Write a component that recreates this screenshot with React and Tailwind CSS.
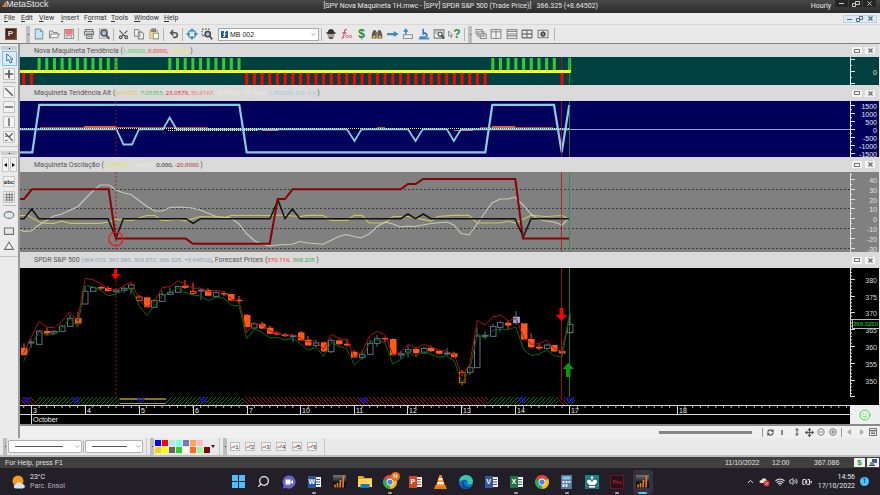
import React from "react";
import {
  Search, Scissors, Undo2, Wifi, Volume2, ChevronUp, ChevronDown, RefreshCw, Move, MoveVertical, Smile,
  BatteryCharging,
} from "lucide-react";

const UI = "font-['Open_Sans','Noto_Sans',sans-serif]";
const ROBOTO = "font-['Roboto','Noto_Sans',sans-serif]";
const ARIAL = "font-['Liberation_Sans',Arial,sans-serif]";

/* ---------- chart data ---------- */

const STEP = 7.69;
const barX = (i) => 23.7 + STEP * i;
const level = (v) => 255 + v / 3;

const range = (a, b) => Array.from({ length: b - a + 1 }, (_, k) => a + k);
const UP_BARS = [...range(2, 12), ...range(19, 28), ...range(61, 69), 71];
const DOWN_BARS = [0, 1, ...range(29, 60), 70];

/* [type, body top, body bottom, wick top, wick bottom]; h hollow, o orange, q hollow orange, b blue */
const CANDLES = [
  ["o", 278, 299, 265, 300], ["h", 261, 263, 252, 278], ["h", 228, 268, 225, 268], ["o", 228, 234, 218, 240],
  ["h", 229, 234, 225, 238], ["h", 213, 229, 210, 229], ["h", 190, 214, 178, 214], ["o", 189, 204, 170, 210],
  ["h", 109, 147, 95, 147], ["h", 98, 109, 96, 109], ["o", 96, 99, 92, 106], ["o", 99, 107, 93, 110],
  ["h", 105, 110, 100, 115], ["h", 100, 106, 95, 113], ["h", 90, 101, 86, 118], ["q", 126, 136, 120, 140],
  ["o", 127, 155, 127, 158], ["h", 137, 157, 132, 157], ["h", 118, 139, 108, 139], ["h", 112, 118, 98, 120],
  ["h", 94, 112, 92, 112], ["o", 92, 97, 75, 102], ["q", 109, 115, 83, 120], ["h", 105, 108, 100, 135],
  ["o", 105, 121, 100, 121], ["h", 113, 124, 107, 126], ["o", 114, 117, 108, 124], ["o", 117, 135, 117, 138],
  ["o", 134, 137, 123, 145], ["o", 180, 215, 177, 217], ["h", 206, 219, 202, 222], ["o", 206, 219, 200, 222],
  ["o", 218, 235, 212, 235], ["o", 233, 237, 228, 241], ["o", 238, 242, 234, 246], ["h", 242, 244, 238, 262],
  ["o", 232, 255, 228, 255], ["o", 254, 270, 243, 272], ["h", 264, 271, 257, 276], ["o", 262, 288, 260, 290],
  ["h", 257, 290, 250, 294], ["o", 256, 266, 253, 271], ["o", 266, 270, 252, 274], ["o", 290, 306, 285, 309],
  ["h", 299, 307, 290, 314], ["h", 265, 298, 255, 298], ["h", 251, 265, 240, 276], ["o", 249, 252, 245, 262],
  ["o", 252, 299, 250, 302], ["h", 296, 300, 287, 312], ["h", 284, 291, 271, 308], ["o", 282, 293, 276, 302],
  ["h", 280, 294, 276, 296], ["o", 279, 287, 272, 292], ["o", 287, 295, 284, 298], ["h", 294, 296, 278, 302],
  ["o", 295, 305, 290, 308], ["q", 352, 383, 345, 392], ["h", 338, 352, 330, 360], ["h", 243, 338, 218, 338],
  ["h", 241, 243, 230, 250], ["h", 215, 244, 207, 244], ["h", 203, 217, 198, 230], ["o", 203, 210, 198, 222],
  ["b", 185, 204, 168, 210], ["o", 205, 252, 205, 254], ["o", 252, 275, 235, 279], ["o", 275, 279, 265, 285],
  ["h", 270, 280, 265, 284], ["o", 270, 288, 270, 290], ["o", 288, 294, 285, 298], ["h", 208, 233, 176, 236],
];
const FORECAST_HIGH = [
  295, 245, 199, 217, 218, 198, 172, 198, 70, 74, 86, 103, 106, 92, 80, 134, 157, 140, 98, 95, 78, 86, 100, 99, 110,
  106, 110, 132, 140, 232, 206, 210, 228, 235, 240, 239, 250, 262, 256, 284, 238, 250, 255, 308, 290, 242, 229, 240,
  300, 292, 268, 280, 268, 276, 286, 288, 300, 364, 328, 196, 211, 186, 181, 198, 190, 247, 268, 266, 255, 282, 289, 176,
];
const FORECAST_LOW = [
  318, 270, 230, 241, 238, 220, 190, 215, 92, 95, 106, 122, 118, 105, 98, 152, 181, 152, 122, 114, 98, 112, 120, 123,
  137, 127, 129, 151, 152, 250, 222, 232, 248, 248, 254, 250, 266, 286, 277, 304, 262, 274, 280, 330, 308, 262, 254, 264,
  327, 314, 292, 305, 289, 298, 307, 303, 318, 383, 345, 235, 252, 226, 222, 224, 216, 284, 302, 298, 285, 301, 307, 180,
];
const linePts = (a) => a.map((v, i) => `${barX(i)},${level(v)}`).join(" ");

const DAYS = [
  [31.5, "3"], [85.5, "4"], [139.5, "5"], [193.5, "6"], [247.5, "7"], [300.5, "10"], [354.5, "11"], [407.5, "12"],
  [461.5, "13"], [515.5, "14"], [569.5, "17"], [677.5, "18"],
];

/* ---------- panels ---------- */

function PanelHeader({ height, children }) {
  return (
    <div className={`flex items-center bg-[#dadada] pl-[14px] pr-1 text-[7px] leading-[10px] text-[#555] ${ROBOTO} ${height}`}>
      <p className="flex-1 whitespace-pre">{children}</p>
      <div className="flex gap-[3px]">
        <button aria-label="Maximize panel" className="flex h-[7px] w-[10px] items-center justify-center bg-[#f4f4f4]">
          <span className="h-[4px] w-[6px] border border-[#777]" />
        </button>
        <button aria-label="Close panel" className="flex h-[7px] w-[10px] items-center justify-center bg-[#f4f4f4]">
          <svg width="5" height="5" viewBox="0 0 5 5" stroke="#666" strokeWidth="1.2"><path d="M.5.5l4 4M4.5.5l-4 4" /></svg>
        </button>
      </div>
    </div>
  );
}

const Val = ({ color, children }) => (
  <span className={`text-[6px] font-['Open_Sans','Noto_Sans',sans-serif] ${color}`}>{children}</span>
);

function Plot({ top, bg, height, children }) {
  return (
    <svg className={`block min-w-0 flex-1 ${height} ${bg}`}>
      <g transform={`translate(-20 ${-top})`}>{children}</g>
    </svg>
  );
}

function Scale({ top, bg, height, y1, y2, major, minor = [], color = "#e8e8e8", children }) {
  return (
    <svg className={`block w-[29px] shrink-0 ${height} ${bg} ${ARIAL}`}>
      <g transform={`translate(-850 ${-top})`}>
        <path d={`M850.5 ${y1}V${y2}`} stroke={color} />
        {minor.map((y) => <path key={y} d={`M850 ${y}h2`} stroke={color} />)}
        {major.map(([y, label]) => (
          <g key={y}>
            <path d={`M850 ${y}h5`} stroke={color} />
            {label && <text x="877" y={y + 3} textAnchor="end" fontSize="7" fill={color}>{label}</text>}
          </g>
        ))}
        {children}
      </g>
    </svg>
  );
}

const Cursors = ({ y1, y2 }) => (
  <>
    <path d={`M115.900 ${y1}V${y2}`} stroke="#c01020" strokeDasharray="2 2" strokeOpacity=".85" />
    <path d={`M561.500 ${y1}V${y2}`} stroke="#c01010" strokeOpacity=".8" />
    <path d={`M569.500 ${y1}V${y2}`} stroke="#1f9a30" strokeOpacity=".8" />
  </>
);

function TrendPanel() {
  return (
    <section>
      <PanelHeader height="h-[13px]">
        Nova Maquineta Tendência (<Val color="text-[#32cd32]">1.00000, </Val>
        <Val color="text-[#ff1010]">0.0000, </Val><Val color="text-[#f4ee3c]">0.0000 </Val>)
      </PanelHeader>
      <div className="flex">
        <Plot top={57} bg="bg-[#004040]" height="h-[28px]">
          {UP_BARS.map((i) => <rect key={i} x={barX(i) - 1.5} y="58" width="3" height="13" fill="#32cd32" />)}
          {DOWN_BARS.map((i) => <rect key={i} x={barX(i) - 1.5} y="72" width="3" height="13" fill="#ff0000" />)}
          <Cursors y1={57} y2={86} />
          <rect x="20" y="70" width="551" height="3" fill="#ffff00" />
        </Plot>
        <Scale top={57} bg="bg-[#004040]" height="h-[28px]" y1={57} y2={85} minor={[65.5, 77.5]}
          major={[[59.5, ""], [71.5, "0"], [83.5, ""]]} />
      </div>
    </section>
  );
}

function TrendAltPanel() {
  return (
    <section>
      <PanelHeader height="h-[16px]">
        Maquineta Tendência Alt (<Val color="text-[#f0c81e]">20.5052, </Val>
        <Val color="text-[#32cd32]">7.05355, </Val><Val color="text-[#ff1010]">23.0579, </Val>
        <Val color="text-[#ff6a2a]">50.6167, </Val><Val color="text-[#f1edd2]">53.7692, -53.7692, </Val>
        <Val color="text-[#8fcbdc]">1,500.00, 0.0, 0.0 </Val>)
      </PanelHeader>
      <div className="flex">
        <Plot top={101} bg="bg-[#00005c]" height="h-[56px]">
          <path d="M569 129.5H3000" stroke="#9c9cd8" />
          <path d="M40 127.5H84M139 127.5H208M480 127.5H553" stroke="#c0392b" fill="none" />
          <path d="M84 127H116M492 127H515" stroke="#ff5a1a" strokeWidth="2" />
          <path d="M116 127.5H139M377 127.5H385" stroke="#d35020" />
          <path d="M262 130.5H278M454 130.5H473" stroke="#e07040" />
          <path d="M20 129.3H116.5L123.5 144.5H132L139 129.3H163L169.7 117.5L176.5 129.3H347L354.5 141L361.5 129.3H408L415.5 141L422.7 129.3H447L453.8 141L461 129.3H569" stroke="#87cede" strokeWidth="1.8" fill="none" />
          <path d="M20 128.500H569" stroke="#f3efd8" strokeDasharray="1 1" />
          <path d="M168 130.5H258" stroke="#f3efd8" strokeDasharray="1 1" />
          <path d="M20 152.3H32.3L39.3 104.8H239.3L246.7 152.3H485.3L492.3 104.8H554L561.7 152.3L569.3 104.8" stroke="#87cede" strokeWidth="2.2" fill="none" />
          <Cursors y1={101} y2={157} />
        </Plot>
        <Scale top={101} bg="bg-[#00005c]" height="h-[56px]" y1={101} y2={157}
          minor={[109.5, 117.5, 125.5, 133.5, 141.5, 149.5]}
          major={[[105.5, "1500"], [113.5, "1000"], [121.5, "500"], [129.5, "0"], [137.5, "-500"], [145.5, "-1000"], [153.5, "-1500"]]} />
      </div>
    </section>
  );
}

function OscillationPanel() {
  return (
    <section>
      <PanelHeader height="h-[15px]">
        Maquineta Oscilação (<Val color="text-[#e8e620]">-2.00000, </Val>
        <Val color="text-[#f1edd2]">1.86514, </Val><Val color="text-black">0.000, </Val>
        <Val color="text-[#a01010]">-20.0000 </Val>)
      </PanelHeader>
      <div className="flex">
        <Plot top={172} bg="bg-[#808080]" height="h-[80px]">
          {[189.5, 208.5, 228.5, 248.5].map((y) => <path key={y} d={`M20 ${y}H3000`} stroke="#3a3a3a" strokeDasharray="2 2" />)}
          <polyline fill="none" stroke="#c8c850" strokeWidth="1.2" points="20,215.5 28,215.5 39,222 46,223.3 54,223.3 62,221 70,223.3 100,223.3 108,222 116,219.5 124,220 132,220.5 140,217.5 147,215.5 155,215.5 162,220.5 168,220.5 176,219 185,221 193,218.7 200,216.5 225,217.5 231,215.5 270,215.5 278,215 300,216.5 307,215.3 323,215.3 331,220.5 347,220.5 354,215.3 362,215.3 369,223 385,223 393,216.5 408,216.5 431,221 438,216.5 453,215.3 469,215.3 477,223 500,223 508,221 515,223 531,215.3 546,216.5 562,215.5 569,219" />
          <polyline fill="none" stroke="#c9c9b6" strokeWidth="1.1" points="20,230 24,231.5 31,231 39,225 54,216 62,214 78,206.5 85,199 93,191 100,185 109,185 116,190 124,193 131,194.5 147,206.5 155,211 162,211 170,207.5 178,207 192,208 200,210 216,216.5 231,218 239,224 247,234 255,241 262,244 270,246 280,244.7 292,244.3 300,241.5 308,243 323,244.3 339,236.5 346,234.5 354,236.5 361,238 369,234 378,226 385,222 393,224 400,227 408,226 415,226.5 423,225 431,223.5 447,222 454,225 461,233.5 469,235 477,224 492,203 500,199 508,199 515,197 523,205 531,214 538,219 546,221 554,222 562,225 569,218" />
          <polyline fill="none" stroke="#111" strokeWidth="1.5" points="20,218.7 24,218.7 31.7,209 39,218.7 108,218.7 116,238 123.3,218.7 186,218.7 193,223.3 200.7,218.7 270,218.7 278,200 285,218.7 292.3,209 300,218.7 400.7,218.7 408,214 415.5,218.7 423.3,214 431,218.7 515,218.7 523.3,237 531,218.7 569.3,218.7" />
          <polyline fill="none" stroke="#8b0000" strokeWidth="2" points="20,199 24,199 32,189.3 108.7,189.3 115.9,238.6 185.7,238.6 193,243.7 269.7,243.7 277.7,199 285,199 292.5,189.3 400.7,189.3 408,184 415.7,184 423,179 515.3,179 523,238.6 569.3,238.6" />
          <circle cx="115.8" cy="238.8" r="7" fill="none" stroke="#e81c1c" strokeWidth="1.3" />
          <Cursors y1={172} y2={253} />
        </Plot>
        <Scale top={172} bg="bg-[#808080]" height="h-[80px]" y1={173} y2={252} color="#e0e0e0"
          minor={[174.5, 184.5, 194.5, 203.5, 213.5, 223.5, 233.5, 243.5]}
          major={[[179.5, "40"], [189.5, "30"], [199.5, "20"], [208.5, "10"], [218.5, "0"], [228.5, "-10"], [238.5, "-20"], [248.5, "-30"]]} />
      </div>
    </section>
  );
}

function Candle({ i, data }) {
  const [type, a, b, w1, w2] = data;
  const x = Math.round(barX(i)) - 3;
  const color = type === "o" || type === "q" ? "#ff5a14" : "#5f7390";
  const y = level(a);
  const h = Math.max(level(b) - y, 1);
  return (
    <g>
      <path d={`M${x + 3} ${level(w1)}V${y}M${x + 3} ${y + h}V${level(w2)}`} stroke={color} />
      {type === "o" && <rect x={x} y={y} width="6.5" height={h + 0.5} fill={color} />}
      {type === "b" && <rect x={x} y={y} width="7" height={h} fill="#8fa6cc" />}
      {(type === "h" || type === "q") && <rect x={x + 0.5} y={y} width="5.5" height={h} fill="none" stroke={color} />}
    </g>
  );
}

/* [x, width, rising] stretches of the ribbon under the price */
const RIBBON = [[20, 15, 0], [35, 85, 1], [166, 77, 1], [243, 245, 0], [488, 70, 1], [558, 10, 0], [568, 7, 1]];

function Hatch({ x, w, up }) {
  const lines = range(0, Math.floor(w / 4)).map((k) => {
    const s = x + k * 4;
    return up ? `M${s - 2} 405l8-8` : `M${s - 2} 397l8 8`;
  });
  return (
    <svg x={x} y="397" width={w} height="8" viewBox={`${x} 397 ${w} 8`}>
      <path d={lines.join("")} stroke={up ? "#087018" : "#a01018"} strokeWidth="1" />
    </svg>
  );
}

function PricePanel() {
  const ticks = range(0, 38).map((k) => 269.2 + k * 3.36).filter((y) => y < 396);
  return (
    <section>
      <PanelHeader height="h-[16px]">
        SPDR S&amp;P 500 <Val color="text-[#7c9bbb]">(364.010, 367.380, 363.970, 366.325, +8.64502)</Val>, Forecast Prices (
        <Val color="text-[#ff1010]">370.116, </Val><Val color="text-[#22a022]">368.205 </Val>)
      </PanelHeader>
      <div className="flex">
        <Plot top={268} bg="bg-black" height="h-[137px]">
          {RIBBON.map(([x, w, up]) => <Hatch key={x} x={x} w={w} up={up} />)}
          <path d="M120 399H166" stroke="#857a00" strokeWidth="2" />
          <path d="M120 403.5H166" stroke="#b0a400" />
          {[27, 76, 141, 203, 364, 522, 570].map((x) => (
            <path key={x} d={`M${x - 3} 397.5c0 6 6 6 6 0M${x - 3.5} 398.5l1.5-1M${x + 3.5} 398.5l-1.5-1M${x - 1.5} 399h3`} stroke="#1414d8" strokeWidth="1.3" fill="none" />
          ))}
          {CANDLES.map((c, i) => <Candle key={i} i={i} data={c} />)}
          <polyline points={linePts(FORECAST_HIGH)} fill="none" stroke="#b80c14" />
          <polyline points={linePts(FORECAST_LOW)} fill="none" stroke="#006e0c" />
          <Cursors y1={268} y2={397} />
          <path d="M114 269h3v5h3l-4.500 5.500l-4.500-5.500h3z" fill="#ff0000" />
          <path d="M559.500 308h4v7h3.500l-5.500 6l-5.500-6h3.500z" fill="#ff0000" />
          <path d="M566 377h4.500v-8h3.500l-5.700-6l-5.700 6h3.400z" fill="#0a960a" />
        </Plot>
        <Scale top={268} bg="bg-black" height="h-[137px]" y1={268} y2={396} minor={ticks} color="#d4d4d4"
          major={[[279.5, "380"], [296.5, "375"], [312.5, "370"], [329.5, "365"], [346.5, "360"], [363.5, "355"], [380.5, "350"], [396.5, ""]]}>
          <rect x="852.5" y="319.500" width="30" height="9" fill="#000" stroke="#bbb" />
          <text x="853" y="326" fontSize="6" fill="#00e000">366.3250</text>
        </Scale>
      </div>
      <div className="flex">
        <svg className={`block h-[19px] min-w-0 flex-1 bg-black ${ARIAL}`}>
          <g transform="translate(-20 -405)">
            <path d="M20 405.500H3000M20 414.500H3000" stroke="#d8d8d8" />
            {range(0, 240).map((i) => <path key={i} d={`M${barX(i)} 405v3`} stroke="#b8b8b8" />)}
            {DAYS.map(([x, d]) => (
              <g key={d}>
                <path d={`M${x} 405v${d === "3" ? 19 : 10}`} stroke="#d8d8d8" />
                <text x={x + 1.5} y="413" fontSize="7" fill="#f0f0f0">{d}</text>
              </g>
            ))}
            <text x="33" y="422" fontSize="7" fill="#f0f0f0">October</text>
          </g>
        </svg>
        <div className="flex w-[29px] items-center justify-center bg-[#efefef]">
          <Smile size={12} color="#3fe03f" />
        </div>
      </div>
    </section>
  );
}

/* ---------- toolbars ---------- */

const Tool = ({ label, className = "", children }) => (
  <button aria-label={label} className={`flex h-[15px] w-[15px] shrink-0 items-center justify-center ${className}`}>{children}</button>
);
const Sep = ({ w = "w-[5px]" }) => (
  <span className={`flex h-[13px] shrink-0 justify-center ${w}`}><span className="w-px bg-[#b4b4b4]" /></span>
);
const Grip = ({ className = "h-[17px]" }) => (
  <span className={`flex w-[4px] shrink-0 items-center justify-center bg-[#bdbdbd] ${className}`}>
    <span className="h-px w-px bg-[#333]" />
  </span>
);
const Ic = ({ size = 12, children, ...rest }) => (
  <svg width={size} height={size} viewBox="0 0 16 16" fill="none" stroke="#707070" strokeWidth="1.4" {...rest}>{children}</svg>
);

function TitleBar() {
  return (
    <header className={`flex h-[13px] items-start bg-linear-to-b from-[#484848] to-[#2c2c2c] text-[#e8e8e8] ${ROBOTO}`}>
      <div className="flex flex-1 items-start">
        <svg className="ml-[2px]" width="4" height="7" viewBox="0 0 4 7"><path d="M0 7L4 1v6z" fill="#e8792a" /></svg>
        <span className={`text-[9px] leading-[9px] ${ARIAL}`}>MetaStock</span>
      </div>
      <span className="whitespace-pre text-[7px] leading-[13px]">[SPY Nova Maquineta 1H.mwc - [SPY] SPDR S&amp;P 500 (Trade Price)]   366.325 (+8.64502)</span>
      <div className="flex w-[282px] items-start justify-end pr-[4px]">
        <span className="mr-[4px] text-[7px] leading-[13px]">Hourly</span>
        <div className="flex gap-px">
          <button aria-label="Minimize" className="flex h-[7px] w-[13px] items-center justify-center bg-[#262626]"><span className="h-px w-[5px] bg-[#ccc]" /></button>
          <button aria-label="Restore" className="flex h-[7px] w-[13px] items-center justify-center bg-[#262626]">
            <svg width="8" height="6" fill="none" stroke="#ccc"><path d="M.5 2.500h3v3h-3zM3.500.5h4v3h-4z" /></svg>
          </button>
          <button aria-label="Close" className="flex h-[7px] w-[13px] items-center justify-center bg-[#262626]">
            <svg width="5" height="5" stroke="#ccc"><path d="M.5.5l4 4M4.500.5l-4 4" /></svg>
          </button>
        </div>
      </div>
    </header>
  );
}

const MENUS = [
  ["w-[17px]", "", "F", "ile"], ["w-[18px]", "", "E", "dit"], ["w-[22px]", "", "V", "iew"], ["w-[23px]", "", "I", "nsert"],
  ["w-[27px]", "F", "o", "rmat"], ["w-[23px]", "", "T", "ools"], ["w-[30px]", "", "W", "indow"], ["w-[20px]", "", "H", "elp"],
];

function MenuBar() {
  return (
    <nav className={`flex h-[12px] items-center border-b border-[#d8d8d8] bg-[#ebebeb] pl-[4px] pr-[3px] text-[7px] leading-[11px] text-[#333] ${ROBOTO}`}>
      {MENUS.map(([w, a, u, b]) => (
        <button key={u + b} className={`text-left ${w}`}>{a}<u>{u}</u>{b}</button>
      ))}
      <div className="ml-auto flex h-[8px] items-center gap-[4px] border border-[#bcd3de] bg-[#dcebf2] px-[3px]">
        <button aria-label="Minimize chart" className="mt-[2px] h-px w-[5px] bg-[#4c6878]" />
        <button aria-label="Restore chart"><svg className="block" width="8" height="6" fill="none" stroke="#4c6878"><path d="M.5 2.500h3v3h-3zM3.500.5h3v3h-3z" /></svg></button>
        <button aria-label="Close chart"><svg className="block" width="5" height="5" stroke="#4c6878" strokeWidth="1.2"><path d="M.5.5l4 4M4.500.5l-4 4" /></svg></button>
      </div>
    </nav>
  );
}

function MainToolbar() {
  return (
    <div className="flex h-[19px] items-center border-b border-[#808080] bg-[#e9e9e9] pl-[3px]">
      <Tool label="Power Console">
        <span className={`flex h-[12px] w-[12px] items-center justify-center border border-[#8a5a40] bg-linear-to-br from-[#2a1c18] to-[#6a4030] text-[8px] leading-none font-bold text-[#f0e0d0] ${ARIAL}`}>P</span>
      </Tool>
      <span className="w-[8px] shrink-0" /><Grip /><span className="w-px shrink-0" />
      <Tool label="New"><Ic stroke="#8a98a0"><path d="M3 1.500h7l3 3v10H3z" fill="#bfe6f6" /><path d="M10 1.500v3h3" fill="#fff" /></Ic></Tool>
      <Tool label="Open"><Ic stroke="#8a8a8a"><path d="M2 13V4h4l1.500 2H12v2" /><path d="M2 13l2.500-5H15l-2.500 5z" fill="#f4f4f4" /></Ic></Tool>
      <Tool label="Save"><Ic stroke="#9a9a9a"><path d="M2 2h12v12H2z" fill="#e8e8e8" /><path d="M4 2h8v6H4z" fill="#f08080" stroke="#e07070" /><path d="M5 14v-4h6v4" /></Ic></Tool>
      <Sep />
      <Tool label="Print"><Ic><path d="M3 2h10v3H3zM2 5h12v4H2zM5 8h7v6H5z" fill="#e4e8e4" /><path d="M6.500 11.500h4" stroke="#5a9a7a" /></Ic></Tool>
      <Tool label="Print preview"><Ic stroke="#555"><path d="M2 1.500h10v12H2z" stroke="#aaa" fill="#f6f6f6" /><circle cx="8" cy="6.500" r="4" fill="#9fc0d8" strokeWidth="2" /><path d="M11 9.500l4 5" strokeWidth="2.500" /></Ic></Tool>
      <Sep />
      <Tool label="Cut"><Scissors size={11} className="-rotate-90" color="#555" strokeWidth={2.4} /></Tool>
      <Tool label="Copy"><Ic stroke="#8a8a8a"><path d="M2 2h5l2 2v7H2zM7 5.500h5l2 2v7H7z" fill="#eee" /></Ic></Tool>
      <Tool label="Paste"><Ic stroke="#c8b060"><path d="M2.500 3h10v11h-10z" fill="#f0dc88" /><path d="M5 1.500h5v3H5z" fill="#999" stroke="#777" /><path d="M7 7h7v7.500H7z" fill="#f4f4f4" stroke="#999" /></Ic></Tool>
      <Sep />
      <Tool label="Undo"><Undo2 size={10} color="#555" strokeWidth={4} /></Tool>
      <Sep w="w-[3px]" />
      <Tool label="Crosshair"><Ic stroke="#2f8cc0" strokeWidth="1.8"><circle cx="8" cy="8" r="5" /><path d="M8 .5v5M8 10.500v5M.5 8h5M10.500 8h5" /></Ic></Tool>
      <Tool label="Zoom"><Ic stroke="#444"><path d="M1.500 1.500h9v9h-9z" strokeDasharray="2 2" /><circle cx="9" cy="8" r="3.500" fill="#a8c8de" strokeWidth="2" /><path d="M11.500 11l3.500 4" strokeWidth="2.400" /></Ic></Tool>
      <span className="w-[4px] shrink-0" />
      <label className="relative block h-[13px] w-[101px] shrink-0">
        <select aria-label="Template" className="block h-[13px] w-full appearance-none border border-[#a8a8a8] bg-white pl-[11px] text-[7px] leading-[11px] text-[#222] font-['Liberation_Sans',Arial,sans-serif]">
          <option>MB 002</option>
        </select>
        <span className="pointer-events-none absolute left-[3px] top-[3px] flex h-[7px] w-[7px] items-center justify-center bg-[#1c5f9c]">
          <svg width="5" height="6" fill="none" stroke="#fff"><path d="M4 .5H2.500v5H1M1 3h3" /></svg>
        </span>
        <ChevronDown size={7} color="#888" strokeWidth={2.5} className="pointer-events-none absolute right-[2px] top-[3px]" />
      </label>
      <Sep w="w-[4px]" />
      <div className="flex w-[139px] shrink-0 justify-between">
        <Tool label="Expert advisor"><Ic stroke="none"><path d="M3.500 6h9v4c0 3-2 5-4.500 5s-4.500-2-4.500-5z" fill="#b89888" /><path d="M4 5c0-5 8-5 8 0l3 1.500C13 8.500 3 8.500 1 6.500z" fill="#333" /><path d="M5.500 12h5v2.500h-5z" fill="#555" /></Ic></Tool>
        <Tool label="Indicator builder"><Ic stroke="#d84868" strokeWidth="1.500"><path d="M9 2C6 1 6 5 5.500 8S4.500 14 2 13.500M3 6.500h5.500" /><path d="M9 9.500c2 0 3 3.500 5 3.500s2-3.500 0-3.500-3 3.500-5 3.500-2-3.500 0-3.500z" strokeWidth="1.100" /></Ic></Tool>
        <Tool label="System tester"><span className={`text-[12px] leading-none font-bold text-[#2c8c2c] ${ARIAL}`}>$</span></Tool>
        <Tool label="Explorer"><Ic stroke="none"><path d="M3 3h3.500l1 8v3H1V9zM13 3H9.500l-1 8v3H15V9z" fill="#5a564c" /><path d="M6 5h4v5H6z" fill="#8a8068" /><circle cx="4" cy="11.500" r="2" fill="#d8b040" /><circle cx="12" cy="11.500" r="2" fill="#d8b040" /></Ic></Tool>
        <Tool label="Next"><Ic stroke="none"><path d="M0 6.500h9V4l6.500 4L9 12V9.500H0z" fill="#2f8fcc" /></Ic></Tool>
        <Tool label="Upload"><Ic><path d="M2 9h12v5H2z" fill="#f0f0f0" stroke="#909090" /><path d="M5 9V4M2.500 5L5 2l2.500 3" stroke="#2f8fcc" strokeWidth="2" /></Ic></Tool>
        <Tool label="Optimizer"><Ic stroke="#2f78b8" strokeWidth="2"><path d="M7 1v7l3-2M3 11c0 2 9 2 9-1s-3-3-4-3" /><path d="M1 14h14" stroke="#3a90d0" strokeWidth="2.500" /></Ic></Tool>
        <Tool label="Data inspector"><Ic stroke="#777"><path d="M1.500 2.500h13v11h-13z" fill="#f0f4f4" /><path d="M3 5h4M3 7h3" stroke="#8ab0a0" /><circle cx="9.500" cy="8" r="2.800" stroke="#444" /><path d="M11.500 10l3 4" stroke="#333" strokeWidth="2" /></Ic></Tool>
        <Tool label="Help"><span className={`flex items-center text-[12px] leading-none font-bold text-[#2c8c3c] ${ARIAL}`}><svg width="5" height="9" fill="#eee" stroke="#777" strokeWidth=".8"><path d="M.5 1v5l1.500-1 1 2.500 1-.5-1-2h1.500z" /></svg>?</span></Tool>
      </div>
      <Sep /><span className="w-px shrink-0" /><Grip /><span className="w-px shrink-0" />
      <div className="flex w-[77px] shrink-0 justify-between">
        <Tool label="Cascade"><Ic stroke="#8a8a8a"><path d="M1.500 2h8v6h-8zM4 5h8v6H4zM7 8h8v6H7z" fill="#eee" /></Ic></Tool>
        <Tool label="Tile columns"><Ic stroke="#8a8a8a"><path d="M1.500 2h13v12h-13zM8 2v12M1.500 5h13" fill="#eee" /></Ic></Tool>
        <Tool label="Tile rows"><Ic stroke="#8a8a8a"><path d="M1.500 2h13v12h-13zM1.500 8h13M1.500 4.500h13M1.500 10.500h13" fill="#eee" /></Ic></Tool>
        <Tool label="Tile grid"><Ic stroke="#777"><path d="M1.500 3h13v10h-13zM8 3v10M1.500 8h13" fill="#eee" strokeWidth="1.700" /></Ic></Tool>
        <Tool label="Layout options"><Ic stroke="#777"><path d="M1.500 3h13v10h-13z" fill="#eee" /><circle cx="8" cy="8" r="2.500" stroke="#444" strokeWidth="2" /><path d="M8 4v8M4 8h8" stroke="#666" strokeWidth="1" /></Ic></Tool>
      </div>
      <Sep w="w-[8px]" />
    </div>
  );
}

const SideLine = () => <span className="mx-auto my-px h-px w-[13px] shrink-0 bg-[#b8b8b8]" />;
const Box = ({ children }) => (
  <svg width="12" height="12" viewBox="0 0 16 16" fill="none" stroke="#555" strokeWidth="1.800">
    <path d="M.7.7h14.600v14.600H.7z" fill="#f4f4f4" stroke="#bcbcbc" strokeWidth="1.200" />{children}
  </svg>
);

function SideBar() {
  return (
    <aside className="flex w-[20px] shrink-0 flex-col items-center self-stretch border-r-2 border-[#9a9a9a] bg-[#ebebeb]">
      <span className="mt-[2px] flex h-[4px] w-[16px] items-center justify-center bg-[#cdcdcd]"><span className="h-px w-px bg-black" /></span>
      <Tool label="Pointer" className="mt-px border border-[#7ec0ec] bg-[#d8eefb]">
        <Ic size={11} stroke="#2a6ca8"><path d="M4 1.500v10l3-2 2 5 2.500-1-2-4.500H13z" fill="#fff" /></Ic>
      </Tool>
      <Tool label="Crosshair cursor"><Box><path d="M8 2.500v11M2.500 8h11" strokeWidth="2.200" /></Box></Tool>
      <SideLine />
      <Tool label="Trendline"><Box><path d="M3 3l10 10" /></Box></Tool>
      <Tool label="Horizontal line"><Box><path d="M2.500 8h11" /></Box></Tool>
      <Tool label="Vertical line"><Box><path d="M8 2.500v11" /></Box></Tool>
      <Tool label="Line studies"><Box><path d="M3 3l10 10M8 8l5-5M3 13l3-1M3 7h3" strokeWidth="1.500" /></Box></Tool>
      <span className="my-[2px] h-px w-full shrink-0 bg-[#c4c4c4]" />
      <span className="my-[2px] flex h-[4px] w-[16px] items-center justify-center bg-[#cdcdcd]"><span className="h-px w-px bg-black" /></span>
      <div className="mb-px flex h-[15px] gap-px">
        <button aria-label="Scroll left" className="flex w-[7px] items-center justify-center border border-[#c8c8c8] bg-[#f2f2f2]"><svg width="3" height="4"><path d="M3 0v4L0 2z" fill="#000" /></svg></button>
        <button aria-label="Scroll right" className="flex w-[7px] items-center justify-center border border-[#c8c8c8] bg-[#f2f2f2]"><svg width="3" height="4"><path d="M0 0v4l3-2z" fill="#000" /></svg></button>
      </div>
      <Tool label="Text" className="mt-px"><span className={`flex h-[11px] w-[12px] items-center justify-center border border-[#c8c8c8] bg-[#f0f0f0] text-[6px] leading-none font-bold text-[#333] ${ARIAL}`}>abc</span></Tool>
      <Tool label="Grid"><Box><path d="M2 5h12M2 8.500h12M2 12h12M5 2v12M8.500 2v12M12 2v12" strokeWidth="1.100" stroke="#666" /></Box></Tool>
      <SideLine />
      <Tool label="Ellipse"><Ic><ellipse cx="8" cy="8" rx="6.500" ry="4.500" fill="#dfe6ea" /></Ic></Tool>
      <Tool label="Rectangle" className="mt-px"><Ic><path d="M2 4h12v8.500H2z" fill="#e6e9ea" /></Ic></Tool>
      <Tool label="Triangle"><Ic><path d="M8 3l6 9.500H2z" fill="#f4f4f4" /></Ic></Tool>
      <span className="mt-[3px] h-px w-full shrink-0 bg-[#c4c4c4]" />
    </aside>
  );
}

function ScrollStrip() {
  return (
    <div className="flex h-[14px] items-center justify-end border-t-2 border-[#8a8a8a] bg-[#efefef] pr-px text-[#555]">
      <span className="mr-[10px] h-[3px] w-[93px] bg-[#858585]" />
      <span className="h-[9px] w-px bg-[#999]" />
      <button aria-label="Refresh" className="flex w-[15px] justify-center"><RefreshCw size={7} strokeWidth={3.5} /></button>
      <button aria-label="Bar width" className="flex w-[8px] justify-center"><span className="h-[5px] w-[2px] bg-[#888]" /></button>
      <span className="w-[4px]" />
      <button aria-label="Stretch vertically" className="flex w-[13px] justify-center"><MoveVertical size={8} strokeWidth={3} /></button>
      <button aria-label="Pan" className="flex w-[12px] justify-center"><Move size={9} strokeWidth={3} /></button>
      <button aria-label="Zoom out" className="flex w-[12px] justify-center"><Ic size={8} stroke="#777" strokeWidth="1.800"><circle cx="8" cy="8" r="6.500" /><path d="M4.500 8h7" /></Ic></button>
      <button aria-label="Zoom in" className="flex w-[12px] justify-center"><Ic size={8} stroke="#666" strokeWidth="1.800"><circle cx="8" cy="8" r="6.500" /><path d="M4.500 8h7M8 4.500v7" /></Ic></button>
      <span className="ml-[2px] h-[9px] w-px bg-[#999]" />
      <button aria-label="Previous" className="flex w-[14px] justify-center"><svg width="4" height="6"><path d="M4 0v6L0 3z" fill="#aaa" /></svg></button>
      <button aria-label="Next bar" className="flex w-[11px] justify-center"><svg width="4" height="6"><path d="M0 0v6l4-3z" fill="#aaa" /></svg></button>
      <button aria-label="Go to date" className="flex w-[12px] justify-center"><Ic size={8} strokeWidth="2"><path d="M1 1h14v14H1zM1 5h14M4 8h8M4 11h8" /></Ic></button>
    </div>
  );
}

const PALETTE = [
  "bg-[#0000ff]", "bg-[#ff0000]", "bg-[#aeeaea]", "bg-[#7fffd4]", "bg-[#7878c0]", "bg-[#ffa54f]", "bg-[#ffb8c8]", "bg-[#e6e6fa]",
  "bg-[#ffd000]", "bg-[#ffff00]", "bg-[#646464]", "bg-[#32cd32]", "bg-[#fffff0]", "bg-[#ff6a20]", "bg-[#98fb98]", "bg-[#800000]",
];

function LineSelect({ label, w, line }) {
  return (
    <label className={`relative block h-[13px] shrink-0 ${w}`}>
      <select aria-label={label} className="block h-[13px] w-full appearance-none rounded-[2px] border border-[#b0b0b0] bg-white text-transparent"><option /></select>
      <span className={`pointer-events-none absolute left-[7px] top-[6px] h-px bg-[#555] ${line}`} />
      <ChevronDown size={7} color="#888" strokeWidth={2.500} className="pointer-events-none absolute right-[1px] top-[3px]" />
    </label>
  );
}

function DrawingToolbar() {
  return (
    <div className="flex h-[19px] items-center border-b-2 border-[#bdbdbd] bg-[#e9e9e9] pl-[3px]">
      <Grip />
      <span className="w-px" />
      <LineSelect label="Line style" w="w-[74px]" line="w-[48px]" />
      <Sep w="w-[3px]" />
      <LineSelect label="Line weight" w="w-[58px]" line="w-[35px]" />
      <span className="w-[3px]" /><span className="h-[17px] w-px bg-[#c8c8c8]" /><span className="w-[3px]" /><Grip /><span className="w-px" />
      <div className="grid grid-cols-8 gap-px">
        {PALETTE.map((c) => <button key={c} aria-label="Colour" className={`h-[6px] w-[6px] ${c}`} />)}
      </div>
      <button aria-label="More colours" className="ml-px flex w-[4px]"><svg width="4" height="3"><path d="M0 0h4L2 3z" fill="#222" /></svg></button>
      <span className="w-[4px]" /><span className="h-[17px] w-px bg-[#c8c8c8]" /><span className="w-[3px]" /><Grip />
      <div className="flex w-[93px] justify-between">
        {[1, 2, 3, 4, 5, 6].map((n) => (
          <button key={n} aria-label={`Chart layout ${n}`} className="flex h-[15px] w-[15px] items-center justify-center">
            <span className={`flex h-[9px] w-[10px] items-center justify-end border border-[#b4c0c4] bg-[#f2f2f2] text-[6px] leading-none text-[#333] ${ARIAL}`}>
              <svg width="5" height="5" fill="none" stroke="#d04848"><path d="M0 4.500l2-2 1 1L5 .5" /></svg>{n}
            </span>
          </button>
        ))}
      </div>
      <span className="ml-[4px] h-[17px] w-px bg-[#c8c8c8]" />
    </div>
  );
}

function StatusBar() {
  return (
    <div className={`flex h-[11px] items-center bg-[#404040] pl-[5px] pr-px text-[7px] leading-[11px] text-[#e0e0e0] ${ARIAL}`}>
      <span className="flex-1">For Help, press F1</span>
      <span className="w-[47px]">11/10/2022</span>
      <span className="w-[42px]">12:00</span>
      <span className="w-[40px]">367.086</span>
      <span className="mr-[2px] flex h-[9px] w-[11px] items-center justify-center bg-[#f0f0f0] text-[8px] font-bold text-[#18a018]">$</span>
      <span className="flex h-[9px] w-[12px] items-center justify-center bg-[#f0f0f0]">
        <svg width="9" height="7"><path d="M3 0h5v4H3z" fill="#3c5a8c" /><path d="M1 3h4v3H1z" fill="#6a88b8" /><path d="M0 6h6v1H0z" fill="#444" /></svg>
      </span>
    </div>
  );
}

/* ---------- taskbar ---------- */

const Chrome = () => (
  <svg width="14" height="14" viewBox="0 0 24 24">
    <path d="M12 12L1.600 6A12 12 0 0 1 22.400 6z" fill="#ea4335" />
    <path d="M12 12L22.400 6A12 12 0 0 1 12 24z" fill="#fbbc05" />
    <path d="M12 12v12A12 12 0 0 1 1.600 6z" fill="#34a853" />
    <circle cx="12" cy="12" r="5.800" fill="#fff" /><circle cx="12" cy="12" r="4.500" fill="#4285f4" />
  </svg>
);
const Office = ({ letter, bg, lines }) => (
  <span className="relative flex h-[12px] w-[13px] items-center">
    <span className={`flex h-[12px] w-[8px] items-center justify-center text-[7px] leading-none font-bold text-white font-['Liberation_Sans',Arial,sans-serif] ${bg}`}>{letter}</span>
    <svg width="5" height="10" viewBox="0 0 5 10"><path d="M0 0h5v10H0z" fill="#f4f4f4" /><path d="M0 2.500h4M0 5h4M0 7.500h4" stroke={lines} /></svg>
  </span>
);
const Stock = () => (
  <svg width="13" height="13" viewBox="0 0 13 13"><defs><linearGradient id="stockBg" x2="0" y2="1"><stop stopColor="#777" /><stop offset=".6" stopColor="#111" /></linearGradient></defs>
    <path d="M0 0h13v13H0z" fill="url(#stockBg)" /><path d="M2 12.500V9.500M4.500 12.500V8M7 12.500L7.500 5M10 12.500L10.500 1" stroke="#f08028" strokeWidth="1.600" /></svg>
);

const APPS = [
  ["Start", <svg width="13" height="13" viewBox="0 0 13 13" fill="#4cc2f8"><path d="M0 0h6v6H0zM7 0h6v6H7zM0 7h6v6H0zM7 7h6v6H7z" /></svg>],
  ["Search", <Search size={13} color="#e8e8e8" strokeWidth={2.400} className="-scale-x-100" />],
  ["Chat", <svg width="14" height="14" viewBox="0 0 14 14"><path d="M7 .5a6.500 6.500 0 1 1-3 12.200L.8 13.500l.8-3A6.500 6.500 0 0 1 7 .5z" fill="#6a62c8" /><path d="M3.500 4.500h5v5h-5zM9 6.500l2-1.500v4L9 7.500z" fill="#fff" /></svg>],
  ["Word", <Office letter="W" bg="bg-[#2b579a]" lines="#2b579a" />, 1],
  ["MetaStock Pro", <Stock />],
  ["File Explorer", <svg width="14" height="13" viewBox="0 0 14 13"><path d="M0 1h5l1.500 2H14v9H0z" fill="#e8a820" /><path d="M0 4h14v8H0z" fill="#ffd45a" /><path d="M2.500 9h9v4h-9z" fill="#1878c8" /></svg>],
  ["Chrome", <span className="relative block"><Chrome /><span className="absolute -right-[3px] -top-[3px] flex h-[9px] w-[9px] items-center justify-center rounded-full bg-[#e8711a] text-[6px] leading-none text-white">N</span></span>, 1],
  ["PowerPoint", <Office letter="P" bg="bg-[#d24726]" lines="#d24726" />],
  ["VLC", <svg width="13" height="14" viewBox="0 0 13 14"><path d="M1.500 10h10l1.500 4H0z" fill="#e87808" /><path d="M5.500 0h2L11 11H2z" fill="#ff8c10" /><path d="M4.800 3h3.400l.7 2.200H4.100zM3.500 7h6l.7 2.200H2.800z" fill="#f4f4f4" /></svg>],
  ["Edge", <svg width="14" height="14" viewBox="0 0 24 24"><circle cx="12" cy="12" r="12" fill="#1474c8" /><path d="M0 11C1 3 8-.5 14 .3 20 1 24 6 24 10.500c0 4-3 5.500-6 5.500-4 0-3.500-2-3-3 .8-3-2-5-5-5-5 0-9 2-10 3z" fill="#38c8a8" /><path d="M8.500 13c0 6 6 9 12 7-5 6-16 4-16-5 0-4 4-7 7-6-2 1-3 2-3 4z" fill="#0c4c98" /></svg>],
  ["Visio", <Office letter="V" bg="bg-[#3955a3]" lines="#3955a3" />],
  ["Excel", <Office letter="X" bg="bg-[#217346]" lines="#217346" />, 1],
  ["Chrome window", <Chrome />],
  ["Calculator", <svg width="11" height="14" viewBox="0 0 11 14"><path d="M0 0h11v14H0z" fill="#5c7890" /><path d="M1.500 1.500h8v3h-8z" fill="#70d0f8" /><path d="M1.500 6h2v2h-2zM4.500 6h2v2h-2zM7.500 6h2v2h-2zM1.500 9h2v3h-2zM4.500 9h2v3h-2z" fill="#e4ecf0" /><path d="M7.500 9h2v3h-2z" fill="#2890e0" /></svg>, 1],
  ["Chess", <svg width="14" height="14" viewBox="0 0 14 14"><path d="M0 0h14v14H0z" fill="#0a8888" /><path d="M7 1v4M5.500 2.500h3" stroke="#fff" /><path d="M1.500 6c1-2.500 4.500-2 5.500.5 1-2.500 4.500-3 5.500-.5.500 2-2 3-2.500 4.500H4C3.500 9 1 8 1.500 6z" fill="#fff" stroke="#222" strokeWidth=".6" /><path d="M3.500 10.500h7V13h-7z" fill="#fff" stroke="#222" strokeWidth=".6" /></svg>],
  ["Profit Pro", <span className="flex h-[14px] w-[14px] items-center justify-center border border-[#6a1828] bg-[#2a1018] text-[6px] leading-none text-[#c82c48]">Pro</span>, 1],
  ["MetaStock", <Stock />, 2],
];

function Taskbar() {
  return (
    <footer className={`flex h-[27px] items-center bg-[#231f28] text-[7px] leading-[9px] text-[#e8e8e8] ${ROBOTO}`}>
      <button className="flex flex-1 items-center gap-[4px] pl-[12px] text-left">
        <svg width="14" height="14" viewBox="0 0 14 14"><circle cx="6" cy="6" r="5.500" fill="#f59a20" /><path d="M4 13.500c-3 0-3-4 0-4 .5-3 5-3 5.500-.5 4-.5 4.500 4.500 1 4.500z" fill="#d4e4f4" /></svg>
        <span>23°C<br /><span className="text-[#b8b8bc]">Parc. Ensol</span></span>
      </button>
      <div className="flex w-[424px] shrink-0 justify-between">
        {APPS.map(([name, icon, state]) => (
          <button key={name} aria-label={name} className={`relative flex h-[24px] w-[20px] items-center justify-center rounded-[3px] ${state === 2 ? "bg-[#36333c]" : ""}`}>
            {icon}
            {state && <span className={`absolute bottom-0 h-[2px] rounded-full ${state === 2 ? "w-[9px] bg-[#4cc2ff]" : "w-[4px] bg-[#a0a0a4]"}`} />}
          </button>
        ))}
      </div>
      <div className="flex flex-1 items-center justify-end pr-[11px]">
        <ChevronUp size={9} strokeWidth={2.500} />
        <svg className="ml-[4px]" width="11" height="10" viewBox="0 0 11 10"><path d="M2 6C0 6 0 3 2.500 3 3.500.5 7 1 7.500 3.500 9 4 9 6 8 6z" fill="#ddd" /><circle cx="7.500" cy="6.500" r="3" fill="#e03030" /><path d="M6.500 5.500l2 2M8.500 5.500l-2 2" stroke="#fff" strokeWidth=".7" /></svg>
        <Wifi className="ml-[5px]" size={10} strokeWidth={2.600} />
        <Volume2 className="ml-[4px]" size={9} strokeWidth={2.400} />
        <BatteryCharging className="ml-[4px]" size={10} strokeWidth={2.600} />
        <span className="ml-[6px] text-right">14:56<br />17/10/2022</span>
        <span className="ml-[5px] flex h-[9px] w-[9px] items-center justify-center rounded-full bg-[#4cc2ff] text-[#222]">1</span>
      </div>
    </footer>
  );
}

export default function App() {
  return (
    <div className="flex min-h-screen flex-col overflow-hidden bg-[#ebebeb]">
      <TitleBar />
      <MenuBar />
      <MainToolbar />
      <div className="flex">
        <SideBar />
        <main className="min-w-0 flex-1">
          <div className="mr-px">
            <TrendPanel />
            <TrendAltPanel />
            <OscillationPanel />
            <PricePanel />
          </div>
          <ScrollStrip />
        </main>
      </div>
      <DrawingToolbar />
      <StatusBar />
      <Taskbar />
    </div>
  );
}
